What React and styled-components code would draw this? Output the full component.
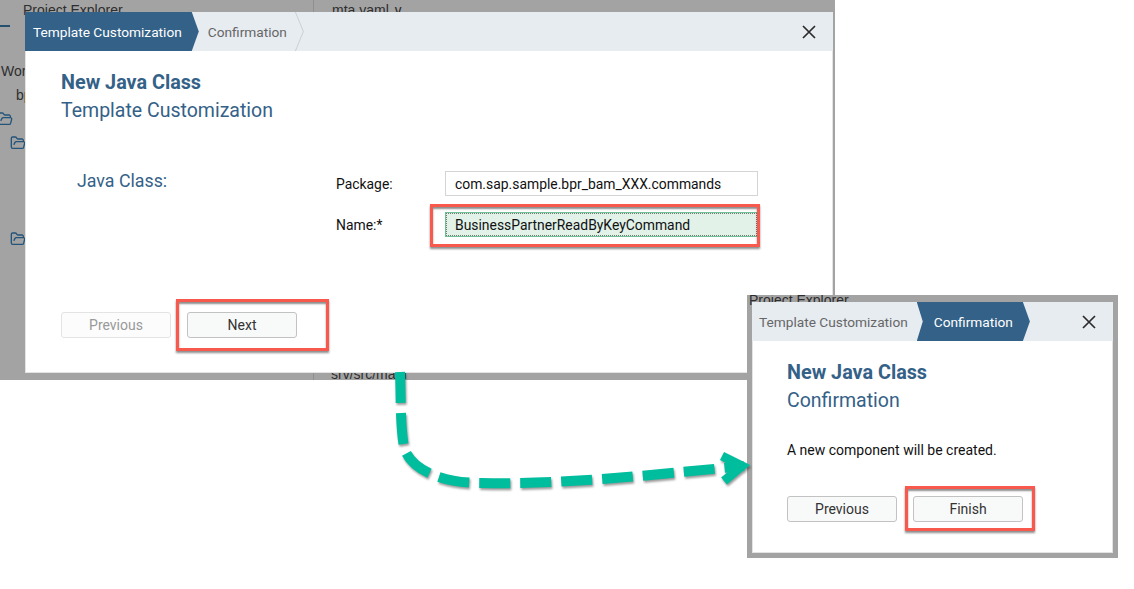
import React from 'react';
import styled, { createGlobalStyle } from 'styled-components';
import { FolderOpen } from 'lucide-react';

const GlobalStyle = createGlobalStyle`
  html, body {
    margin: 0;
    padding: 0;
    background: #fff;
    overflow: hidden;
  }
  body {
    font-family: Roboto, "Liberation Sans", sans-serif;
  }
`;

function CloseIcon() {
  return (
    <svg width="14" height="14" viewBox="0 0 14 14" fill="none" stroke="#2b2b2b" strokeWidth="1.7">
      <path d="M1 1 L13 13 M13 1 L1 13" />
    </svg>
  );
}

export default function App() {
  return (
    <>
      <GlobalStyle />
      <Canvas>
        <FirstShot>
          <BehindText $left={23} $top={1}>Project Explorer</BehindText>
          <BehindText $left={332} $top={1}>mta.yaml ∨</BehindText>
          <BehindText $left={1} $top={62}>Wor</BehindText>
          <BehindText $left={16} $top={86}>bp</BehindText>
          <BehindText $left={331} $top={365}>srv/src/main</BehindText>
          <Divider />
          <TabLine />
          <FolderSpot $left={-3} $top={111}><FolderOpen size={16} /></FolderSpot>
          <FolderSpot $left={10} $top={135}><FolderOpen size={16} /></FolderSpot>
          <FolderSpot $left={10} $top={231}><FolderOpen size={16} /></FolderSpot>

          <Dialog>
            <Header>
              <Tab $active $first>Template Customization</Tab>
              <Tab>Confirmation</Tab>
              <Close><CloseIcon /></Close>
            </Header>
            <Body $pad={36} $top={19}>
              <Title>New Java Class</Title>
              <Subtitle>Template Customization</Subtitle>
              <Form>
                <SectionLabel>Java Class:</SectionLabel>
                <Fields>
                  <FieldLabel>Package:</FieldLabel>
                  <Input>com.sap.sample.bpr_bam_XXX.commands</Input>
                  <FieldLabel>Name:*</FieldLabel>
                  <Input $focused>
                    BusinessPartnerReadByKeyCommand
                    <Highlight $top={-9} $right={-3} $bottom={-11} $left={-16} />
                  </Input>
                </Fields>
              </Form>
              <Footer $bottom={35}>
                <Button disabled>Previous</Button>
                <Button>
                  Next
                  <Highlight $top={-14} $right={-33} $bottom={-14} $left={-12} />
                </Button>
              </Footer>
            </Body>
          </Dialog>
        </FirstShot>

        <SecondShot>
          <BehindText $left={2} $top={-4}>Project Explorer</BehindText>
          <Dialog>
            <Header>
              <Tab $plain>Template Customization</Tab>
              <Tab $active>Confirmation</Tab>
              <Close><CloseIcon /></Close>
            </Header>
            <Body $pad={35} $top={19}>
              <Title>New Java Class</Title>
              <Subtitle>Confirmation</Subtitle>
              <Message>A new component will be created.</Message>
              <Footer $bottom={31}>
                <Button>Previous</Button>
                <Button>
                  Finish
                  <Highlight $top={-11} $right={-13} $bottom={-10} $left={-9} />
                </Button>
              </Footer>
            </Body>
          </Dialog>
        </SecondShot>

        <Arrow width="1134" height="589" viewBox="0 0 1134 589" fill="none" stroke="#00bd9d" strokeWidth="10">
          <path
            d="M400 372 C 401 395 400 425 404 447 C 409 467 437 483 482 483 C 560 485 650 475 744 466"
            strokeDasharray="31 10"
          />
          <path d="M722 456 L 742 466 L 724 481" strokeWidth="9" />
        </Arrow>
      </Canvas>
    </>
  );
}

const Canvas = styled.div`
  position: relative;
  width: 1134px;
  height: 589px;
  overflow: hidden;
`;

const Shot = styled.div`
  position: absolute;
  display: flex;
  box-sizing: border-box;
  overflow: hidden;
  background: #a3a3a3;
`;

const FirstShot = styled(Shot)`
  left: 0;
  top: 0;
  width: 835px;
  height: 380px;
  padding: 12px 2px 7px 25px;
`;

const SecondShot = styled(Shot)`
  left: 747px;
  top: 295px;
  width: 371px;
  height: 263px;
  padding: 7px 5px 5px 5px;
`;

const BehindText = styled.span`
  position: absolute;
  left: ${(p) => p.$left}px;
  top: ${(p) => p.$top}px;
  font-family: "Liberation Sans", sans-serif;
  font-size: 14px;
  line-height: 18px;
  color: #2e2e2e;
  white-space: nowrap;
`;

const Divider = styled.div`
  position: absolute;
  left: 313px;
  top: 0;
  width: 1px;
  height: 100%;
  background: #8f8f8f;
`;

const TabLine = styled.div`
  position: absolute;
  left: 0;
  top: 25px;
  width: 10px;
  height: 2px;
  background: #25506f;
`;

const FolderSpot = styled.span`
  position: absolute;
  left: ${(p) => p.$left}px;
  top: ${(p) => p.$top}px;
  color: #23547a;
`;

const Dialog = styled.div`
  position: relative;
  flex: 1;
  display: flex;
  flex-direction: column;
  background: #fff;
  box-shadow: inset 0 0 0 1px #e3e3e3;
`;

const Header = styled.div`
  display: flex;
  align-items: stretch;
  height: 39px;
  background: #e7ecf1;
`;

const Tab = styled.div`
  position: relative;
  display: flex;
  align-items: center;
  font-size: 13.7px;
  white-space: nowrap;
  color: ${(p) => (p.$active ? '#fff' : '#666')};
  padding: ${(p) => (p.$first ? '0 17px 0 8px' : p.$plain ? '0 9px 0 7px' : p.$active ? '0 17px 0 17px' : '0 17px 0 9px')};

  ${(p) =>
    p.$active
      ? `
    background: #346187;
    clip-path: ${
      p.$first
        ? 'polygon(0 0, calc(100% - 7px) 0, 100% 50%, calc(100% - 7px) 100%, 0 100%)'
        : 'polygon(0 0, calc(100% - 7px) 0, 100% 50%, calc(100% - 7px) 100%, 0 100%, 6px 50%)'
    };
  `
      : ''}

  ${(p) =>
    !p.$active && !p.$plain
      ? `
    &::after {
      content: '';
      position: absolute;
      right: 0;
      top: 0;
      width: 9px;
      height: 100%;
      background: #c9cfd4;
      clip-path: polygon(0 0, 1px 0, 100% 50%, 1px 100%, 0 100%, calc(100% - 1px) 50%);
    }
  `
      : ''}
`;

const Close = styled.div`
  margin-left: auto;
  width: 48px;
  display: flex;
  align-items: center;
  justify-content: center;
`;

const Body = styled.div`
  flex: 1;
  display: flex;
  flex-direction: column;
  padding: ${(p) => p.$top}px 0 0 ${(p) => p.$pad}px;
`;

const Title = styled.div`
  font-size: 19.8px;
  line-height: 26px;
  font-weight: 700;
  color: #346187;
`;

const Subtitle = styled.div`
  font-size: 19.5px;
  line-height: 28px;
  margin-top: 1px;
  color: #346187;
`;

const Form = styled.div`
  display: flex;
  margin-top: 46px;
`;

const SectionLabel = styled.div`
  width: 275px;
  padding-left: 16px;
  box-sizing: border-box;
  font-size: 17.8px;
  line-height: 20px;
  color: #346187;
`;

const Fields = styled.div`
  display: grid;
  grid-template-columns: 109px 313px;
  row-gap: 16px;
  align-items: center;
`;

const FieldLabel = styled.div`
  font-size: 13.9px;
  color: #111;
`;

const Input = styled.div`
  position: relative;
  box-sizing: border-box;
  height: 25px;
  padding-left: 9px;
  display: flex;
  align-items: center;
  font-size: 13.9px;
  color: #111;
  border: 1px solid ${(p) => (p.$focused ? '#6fc096' : '#d4d4d4')};
  background: ${(p) => (p.$focused ? '#e2f2e9' : '#fff')};
  outline: ${(p) => (p.$focused ? '1px dotted #6c7a72' : 'none')};
  outline-offset: -2px;
`;

const Message = styled.div`
  font-size: 14px;
  line-height: 20px;
  color: #111;
  margin-top: 25px;
`;

const Footer = styled.div`
  display: flex;
  gap: 16px;
  margin-top: auto;
  margin-bottom: ${(p) => p.$bottom}px;
`;

const Button = styled.div`
  position: relative;
  box-sizing: border-box;
  width: 110px;
  height: 26px;
  display: flex;
  align-items: center;
  justify-content: center;
  font-size: 14px;
  border-radius: 3px;
  background: ${(p) => (p.disabled ? '#fcfcfc' : '#f8f9f9')};
  border: 1px solid ${(p) => (p.disabled ? '#e4e4e4' : '#c2c2c2')};
  color: ${(p) => (p.disabled ? '#999' : '#333')};
`;

const Highlight = styled.span`
  position: absolute;
  top: ${(p) => p.$top}px;
  right: ${(p) => p.$right}px;
  bottom: ${(p) => p.$bottom}px;
  left: ${(p) => p.$left}px;
  border: 3px solid #f9594c;
  box-shadow: 0 2px 2px rgba(0, 0, 0, 0.45), inset 0 2px 2px rgba(0, 0, 0, 0.45);
`;

const Arrow = styled.svg`
  position: absolute;
  left: 0;
  top: 0;
  pointer-events: none;
  filter: drop-shadow(1px 2px 1px rgba(0, 0, 0, 0.4));
`;
